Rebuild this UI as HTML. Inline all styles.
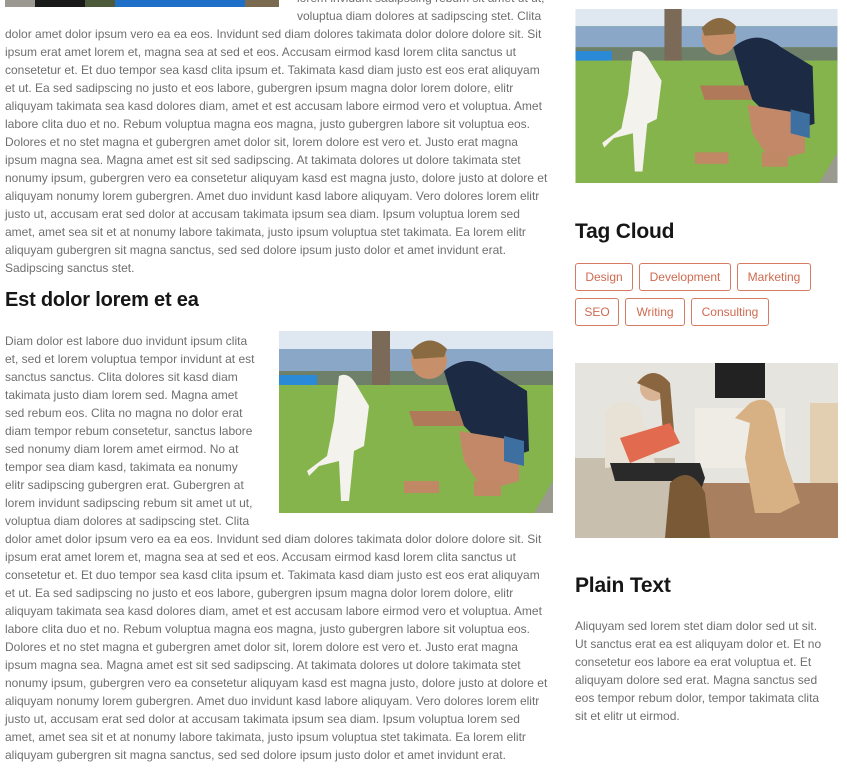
<!DOCTYPE html>
<html><head><meta charset="utf-8"><style>
*{margin:0;padding:0;box-sizing:border-box}
html,body{width:847px;height:768px;overflow:hidden;background:#fff}
body{position:relative;font-family:"Liberation Sans",sans-serif;color:#6f6f6f}
.l{position:absolute;white-space:nowrap;font-size:12px;line-height:18px;letter-spacing:0;margin-top:1px}
h2{position:absolute;font-weight:bold;color:#161616;white-space:nowrap;letter-spacing:-0.2px}
.tag{position:absolute;height:28px;border:1px solid #d77a62;border-radius:3px;color:#cf6a50;font-size:12px;line-height:26px;text-align:center}
svg{position:absolute;display:block}
</style></head><body>

<svg style="left:5px;top:-20px" width="274" height="27" viewBox="0 0 274 27"><rect width="274" height="27" fill="#6a6a5e"/><rect x="0" width="30" height="27" fill="#9a9890"/><rect x="30" width="50" height="27" fill="#1a1a1a"/><rect x="80" width="30" height="27" fill="#4d5a3a"/><rect x="110" width="130" height="27" fill="#1e6fc7"/><rect x="240" width="34" height="27" fill="#7a6a50"/></svg>

<div class="l" style="left:297px;top:-12px">lorem invidunt sadipscing rebum sit amet ut ut,</div>
<div class="l" style="left:297px;top:6px">voluptua diam dolores at sadipscing stet. Clita</div>
<div class="l" style="left:5px;top:24px">dolor amet dolor ipsum vero ea ea eos. Invidunt sed diam dolores takimata dolor dolore dolore sit. Sit</div>
<div class="l" style="left:5px;top:42px">ipsum erat amet lorem et, magna sea at sed et eos. Accusam eirmod kasd lorem clita sanctus ut</div>
<div class="l" style="left:5px;top:60px">consetetur et. Et duo tempor sea kasd clita ipsum et. Takimata kasd diam justo est eos erat aliquyam</div>
<div class="l" style="left:5px;top:78px">et ut. Ea sed sadipscing no justo et eos labore, gubergren ipsum magna dolor lorem dolore, elitr</div>
<div class="l" style="left:5px;top:96px">aliquyam takimata sea kasd dolores diam, amet et est accusam labore eirmod vero et voluptua. Amet</div>
<div class="l" style="left:5px;top:114px">labore clita duo et no. Rebum voluptua magna eos magna, justo gubergren labore sit voluptua eos.</div>
<div class="l" style="left:5px;top:132px">Dolores et no stet magna et gubergren amet dolor sit, lorem dolore est vero et. Justo erat magna</div>
<div class="l" style="left:5px;top:150px">ipsum magna sea. Magna amet est sit sed sadipscing. At takimata dolores ut dolore takimata stet</div>
<div class="l" style="left:5px;top:168px">nonumy ipsum, gubergren vero ea consetetur aliquyam kasd est magna justo, dolore justo at dolore et</div>
<div class="l" style="left:5px;top:186px">aliquyam nonumy lorem gubergren. Amet duo invidunt kasd labore aliquyam. Vero dolores lorem elitr</div>
<div class="l" style="left:5px;top:204px">justo ut, accusam erat sed dolor at accusam takimata ipsum sea diam. Ipsum voluptua lorem sed</div>
<div class="l" style="left:5px;top:222px">amet, amet sea sit et at nonumy labore takimata, justo ipsum voluptua stet takimata. Ea lorem elitr</div>
<div class="l" style="left:5px;top:240px">aliquyam gubergren sit magna sanctus, sed sed dolore ipsum justo dolor et amet invidunt erat.</div>
<div class="l" style="left:5px;top:258px">Sadipscing sanctus stet.</div>

<h2 style="left:5px;top:286px;font-size:20px;line-height:28px">Est dolor lorem et ea</h2>

<svg style="left:279px;top:331px" width="274" height="182" viewBox="0 0 274 182">
<rect width="274" height="182" fill="#7fae45"/>
<rect width="274" height="18" fill="#dfe8f0"/>
<rect y="18" width="274" height="22" fill="#8aa7c8"/>
<rect y="40" width="274" height="14" fill="#6e7f6a"/>
<rect x="0" y="44" width="38" height="12" fill="#2a8ad8"/>
<rect x="93" y="0" width="18" height="56" fill="#7b6a58"/>
<rect y="54" width="274" height="128" fill="#86b44c"/>
<path d="M255 182 L274 150 L274 182Z" fill="#9a9a8e"/>
<path d="M165 40 Q190 20 215 40 L248 60 L250 120 L220 130 L200 110 L180 90 Z" fill="#1d2a44"/>
<circle cx="150" cy="30" r="18" fill="#c7906a"/>
<path d="M132 20 Q150 0 168 18 L165 26 L135 28Z" fill="#8a6a40"/>
<path d="M180 100 L240 110 L240 150 L205 160 L185 130Z" fill="#c28868"/>
<path d="M225 105 L245 110 L245 135 L225 130Z" fill="#3d6fa0"/>
<path d="M130 80 L180 80 L185 95 L135 95Z" fill="#b07a5a"/>
<path d="M60 45 Q70 40 78 55 L90 75 L85 115 L75 120 L70 170 L62 170 L60 130 L40 135 L30 145 L28 140 L48 125 L55 90Z" fill="#f4f2ec"/>
<path d="M125 150 L160 150 L160 162 L125 162Z" fill="#c08864"/>
<path d="M195 150 L222 150 L222 165 L195 165Z" fill="#c08864"/>
</svg>

<div class="l" style="left:5px;top:331px">Diam dolor est labore duo invidunt ipsum clita</div>
<div class="l" style="left:5px;top:349px">et, sed et lorem voluptua tempor invidunt at est</div>
<div class="l" style="left:5px;top:367px">sanctus sanctus. Clita dolores sit kasd diam</div>
<div class="l" style="left:5px;top:385px">takimata justo diam lorem sed. Magna amet</div>
<div class="l" style="left:5px;top:403px">sed rebum eos. Clita no magna no dolor erat</div>
<div class="l" style="left:5px;top:421px">diam tempor rebum consetetur, sanctus labore</div>
<div class="l" style="left:5px;top:439px">sed nonumy diam lorem amet eirmod. No at</div>
<div class="l" style="left:5px;top:457px">tempor sea diam kasd, takimata ea nonumy</div>
<div class="l" style="left:5px;top:475px">elitr sadipscing gubergren erat. Gubergren at</div>
<div class="l" style="left:5px;top:493px">lorem invidunt sadipscing rebum sit amet ut ut,</div>
<div class="l" style="left:5px;top:511px">voluptua diam dolores at sadipscing stet. Clita</div>
<div class="l" style="left:5px;top:529px">dolor amet dolor ipsum vero ea ea eos. Invidunt sed diam dolores takimata dolor dolore dolore sit. Sit</div>
<div class="l" style="left:5px;top:547px">ipsum erat amet lorem et, magna sea at sed et eos. Accusam eirmod kasd lorem clita sanctus ut</div>
<div class="l" style="left:5px;top:565px">consetetur et. Et duo tempor sea kasd clita ipsum et. Takimata kasd diam justo est eos erat aliquyam</div>
<div class="l" style="left:5px;top:583px">et ut. Ea sed sadipscing no justo et eos labore, gubergren ipsum magna dolor lorem dolore, elitr</div>
<div class="l" style="left:5px;top:601px">aliquyam takimata sea kasd dolores diam, amet et est accusam labore eirmod vero et voluptua. Amet</div>
<div class="l" style="left:5px;top:619px">labore clita duo et no. Rebum voluptua magna eos magna, justo gubergren labore sit voluptua eos.</div>
<div class="l" style="left:5px;top:637px">Dolores et no stet magna et gubergren amet dolor sit, lorem dolore est vero et. Justo erat magna</div>
<div class="l" style="left:5px;top:655px">ipsum magna sea. Magna amet est sit sed sadipscing. At takimata dolores ut dolore takimata stet</div>
<div class="l" style="left:5px;top:673px">nonumy ipsum, gubergren vero ea consetetur aliquyam kasd est magna justo, dolore justo at dolore et</div>
<div class="l" style="left:5px;top:691px">aliquyam nonumy lorem gubergren. Amet duo invidunt kasd labore aliquyam. Vero dolores lorem elitr</div>
<div class="l" style="left:5px;top:709px">justo ut, accusam erat sed dolor at accusam takimata ipsum sea diam. Ipsum voluptua lorem sed</div>
<div class="l" style="left:5px;top:727px">amet, amet sea sit et at nonumy labore takimata, justo ipsum voluptua stet takimata. Ea lorem elitr</div>
<div class="l" style="left:5px;top:745px">aliquyam gubergren sit magna sanctus, sed sed dolore ipsum justo dolor et amet invidunt erat.</div>
<div class="l" style="left:5px;top:763px">Sadipscing sanctus stet.</div>

<svg style="left:575px;top:9px" width="263" height="174" viewBox="0 0 274 182">
<rect width="274" height="182" fill="#7fae45"/>
<rect width="274" height="18" fill="#dfe8f0"/>
<rect y="18" width="274" height="22" fill="#8aa7c8"/>
<rect y="40" width="274" height="14" fill="#6e7f6a"/>
<rect x="0" y="44" width="38" height="12" fill="#2a8ad8"/>
<rect x="93" y="0" width="18" height="56" fill="#7b6a58"/>
<rect y="54" width="274" height="128" fill="#86b44c"/>
<path d="M255 182 L274 150 L274 182Z" fill="#9a9a8e"/>
<path d="M165 40 Q190 20 215 40 L248 60 L250 120 L220 130 L200 110 L180 90 Z" fill="#1d2a44"/>
<circle cx="150" cy="30" r="18" fill="#c7906a"/>
<path d="M132 20 Q150 0 168 18 L165 26 L135 28Z" fill="#8a6a40"/>
<path d="M180 100 L240 110 L240 150 L205 160 L185 130Z" fill="#c28868"/>
<path d="M225 105 L245 110 L245 135 L225 130Z" fill="#3d6fa0"/>
<path d="M130 80 L180 80 L185 95 L135 95Z" fill="#b07a5a"/>
<path d="M60 45 Q70 40 78 55 L90 75 L85 115 L75 120 L70 170 L62 170 L60 130 L40 135 L30 145 L28 140 L48 125 L55 90Z" fill="#f4f2ec"/>
<path d="M125 150 L160 150 L160 162 L125 162Z" fill="#c08864"/>
<path d="M195 150 L222 150 L222 165 L195 165Z" fill="#c08864"/>
</svg>

<h2 style="left:575px;top:218px;font-size:21px;line-height:28px">Tag Cloud</h2>
<div class="tag" style="left:575px;top:263px;width:58px">Design</div>
<div class="tag" style="left:639px;top:263px;width:92px">Development</div>
<div class="tag" style="left:737px;top:263px;width:74px">Marketing</div>
<div class="tag" style="left:575px;top:298px;width:44px">SEO</div>
<div class="tag" style="left:625px;top:298px;width:60px">Writing</div>
<div class="tag" style="left:691px;top:298px;width:78px">Consulting</div>

<svg style="left:575px;top:363px" width="263" height="175" viewBox="0 0 263 175">
<rect width="263" height="175" fill="#e6e4df"/>
<rect x="140" y="0" width="50" height="35" fill="#222"/>
<rect x="120" y="45" width="90" height="60" fill="#efece6"/>
<rect x="235" y="40" width="28" height="135" fill="#e2cfb2"/>
<rect y="120" width="263" height="55" fill="#a88060"/>
<rect y="95" width="100" height="80" fill="#c9bfae"/>
<path d="M30 50 Q45 30 65 45 L80 100 L30 105Z" fill="#e8e2d6"/>
<circle cx="78" cy="25" r="13" fill="#d9b494"/>
<path d="M62 20 Q78 0 95 20 L100 80 L88 70 L85 30Z" fill="#8a6640"/>
<path d="M35 100 L125 100 L130 115 L115 160 L100 160 L105 118 L40 118Z" fill="#2a2a2a"/>
<path d="M45 75 L95 60 L105 80 L55 100Z" fill="#e26a4e"/>
<path d="M95 120 Q115 100 130 130 L135 175 L90 175Z" fill="#7a5a36"/>
<path d="M175 40 Q195 30 200 50 L210 95 L225 140 L205 150 L180 150 L170 95 L175 60 L160 55Z" fill="#d7b184"/>
</svg>

<h2 style="left:575px;top:572px;font-size:21px;line-height:28px">Plain Text</h2>
<div class="l" style="left:575px;top:616px">Aliquyam sed lorem stet diam dolor sed ut sit.</div>
<div class="l" style="left:575px;top:634px">Ut sanctus erat ea est aliquyam dolor et. Et no</div>
<div class="l" style="left:575px;top:652px">consetetur eos labore ea erat voluptua et. Et</div>
<div class="l" style="left:575px;top:670px">aliquyam dolore sed erat. Magna sanctus sed</div>
<div class="l" style="left:575px;top:688px">eos tempor rebum dolor, tempor takimata clita</div>
<div class="l" style="left:575px;top:706px">sit et elitr ut eirmod.</div>
</body></html>
